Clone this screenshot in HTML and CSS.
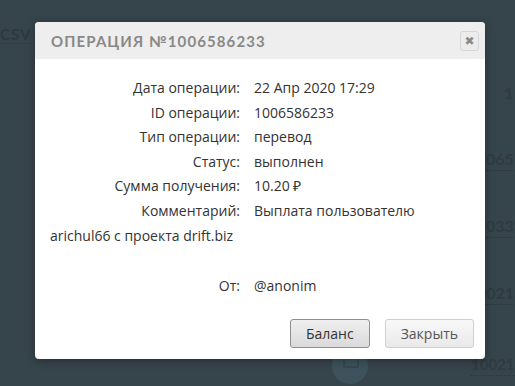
FILE: index.html
```html
<!DOCTYPE html>
<html lang="ru">

<head>
  <meta charset="UTF-8">
  <meta name="viewport" content="width=device-width, initial-scale=1.0">
  <title>Операция №1006586233</title>
  <link rel="stylesheet" href="styles.css">
</head>

<body>
<div class="page">
  <div class="page-top">
    <span class="csv">CSV</span>
  </div>
  <div class="page-list">
    <span class="num num-1">1</span>
    <span class="num">065</span>
    <span class="num">033</span>
    <span class="num num-wide">0021</span>
    <span class="num num-last">10021</span>
  </div>
  <div class="page-bottom">
    <span class="round"><span class="round-icon"></span></span>
  </div>
</div>

<div class="modal">
  <div class="modal-header">
    <h3 class="modal-title">Операция №1006586233</h3>
    <button class="close">&#10006;</button>
  </div>
  <div class="modal-body">
    <div class="row"><span class="label">Дата операции:</span>22 Апр 2020 17:29</div>
    <div class="row"><span class="label">ID операции:</span>1006586233</div>
    <div class="row"><span class="label">Тип операции:</span>перевод</div>
    <div class="row"><span class="label">Статус:</span>выполнен</div>
    <div class="row"><span class="label">Сумма получения:</span>10.20 &#8381;</div>
    <div class="row"><span class="label">Комментарий:</span>Выплата пользователю arichul66 с проекта drift.biz</div>
    <div class="row row-from"><span class="label">От:</span>@anonim</div>
  </div>
  <div class="modal-footer">
    <button class="btn btn-active">Баланс</button>
    <button class="btn">Закрыть</button>
  </div>
</div>
</body>
</html>
```

FILE: styles.css
```css
html,
body {
  margin: 0;
  height: 100%;
  background-color: #36444b;
  font-family: 'Lato', sans-serif;
  overflow: hidden;
}
.page {
  position: relative;
  height: 100%;
}
.page-top {
  padding: 24px 0 0 0;
}
.csv {
  font-size: 15px;
  font-weight: 700;
  letter-spacing: 1px;
  color: #2d393f;
  border-bottom: 1px dotted #2d393f;
}
.page-list {
  display: flex;
  flex-direction: column;
  align-items: flex-start;
  gap: 44px;
  margin: 39px 0 0 486px;
}
.num {
  font-size: 16px;
  font-weight: 700;
  color: #2f3b41;
  border-bottom: 1px dotted #2a353a;
  line-height: 22px;
}
.num-1 {
  margin-left: 18px;
  border-bottom: none;
}
.num-wide {
  margin-left: -9px;
}
.num-last {
  margin-top: 4px;
  margin-left: -15px;
  font-size: 15px;
}
.page-bottom {
  position: absolute;
  left: 0;
  right: 0;
  bottom: 0;
}
.round {
  position: absolute;
  left: 332px;
  top: -38px;
  width: 36px;
  height: 36px;
  border-radius: 50%;
  background-color: #3d525c;
}
.round-icon {
  position: absolute;
  left: 11px;
  top: 9px;
  width: 12px;
  height: 9px;
  border: 2px solid #34474f;
  border-top: none;
}

.modal {
  position: absolute;
  left: 35px;
  top: 22px;
  width: 450px;
  background-color: #fff;
  border-radius: 4px;
  overflow: hidden;
  box-shadow: 0 2px 8px rgba(0, 0, 0, 0.3);
}
.modal-header {
  display: flex;
  align-items: center;
  justify-content: space-between;
  height: 37px;
  padding: 0 6px 0 16px;
  background-color: #eeeeee;
}
.modal-title {
  margin: 0;
  font-family: 'Lato', sans-serif;
  font-size: 15px;
  font-weight: 700;
  letter-spacing: 1.1px;
  text-transform: uppercase;
  color: #888;
}
.close {
  width: 19px;
  height: 20px;
  padding: 0;
  border: 1px solid #d6d6d6;
  border-radius: 3px;
  background-color: #ececec;
  color: #8a8a8a;
  font-family: 'DejaVu Sans', sans-serif;
  font-size: 12px;
  font-weight: 700;
  line-height: 18px;
}
.modal-body {
  padding: 17px 15px 10px 15px;
  font-family: 'Open Sans', sans-serif;
  font-size: 14px;
  line-height: 24.6px;
  color: #333;
}
.label {
  display: inline-block;
  width: 190px;
  margin-right: 14px;
  text-align: right;
}
.row-from {
  margin-top: 26px;
}
.modal-footer {
  display: flex;
  justify-content: flex-end;
  gap: 15px;
  padding: 10px 11px 11px 0;
}
.btn {
  height: 29px;
  padding: 0 15px;
  font-family: 'Open Sans', sans-serif;
  font-size: 14px;
  color: #555;
  border: 1px solid #cfcfcf;
  border-radius: 3px;
  background: linear-gradient(#f9f9f9, #e9e9e9);
}
.btn-active {
  color: #333;
  border-color: #8f8f8f;
  background: linear-gradient(#efefef, #dadada);
}
```
